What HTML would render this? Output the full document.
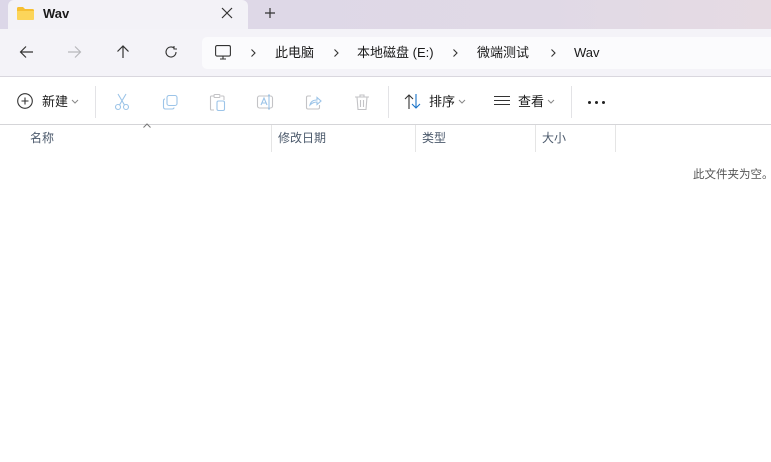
<!DOCTYPE html><html><head><meta charset="utf-8"><style>
*{margin:0;padding:0;box-sizing:border-box}
body{width:771px;height:462px;background:#fff;font-family:"Liberation Sans","Noto Sans CJK SC",sans-serif;position:relative;overflow:hidden;font-size:13px;color:#1a1a1a}
.a{position:absolute;white-space:nowrap;line-height:16px}
svg{position:absolute;overflow:visible}
</style></head><body>
<div class="a" style="left:0;top:0;width:771px;height:29px;background:linear-gradient(90deg,#dcd7e8,#e0d9e6 70%,#e6dbe3)"></div>
<div class="a" style="left:8px;top:0;width:240px;height:29px;background:#f3f2f7;border-radius:6px 6px 0 0"></div>
<svg style="left:17px;top:7px" width="17" height="13"><path d="M0 1.5Q0 0 1.5 0H6L8 2H15.5Q17 2 17 3.5V11.5Q17 13 15.5 13H1.5Q0 13 0 11.5Z" fill="#f6bf32"/><path d="M0 4H17V11.5Q17 13 15.5 13H1.5Q0 13 0 11.5Z" fill="#fcd55a"/></svg>
<div class="a" style="left:43px;top:6px;font-size:13px;font-weight:bold">Wav</div>
<svg style="left:222px;top:8px" width="10" height="10"><path d="M0 0L10 10M10 0L0 10" stroke="#333" stroke-width="1.2"/></svg>
<svg style="left:265px;top:8px" width="10" height="10"><path d="M5 0V10M0 5H10" stroke="#333" stroke-width="1.2"/></svg>
<div class="a" style="left:0;top:29px;width:771px;height:48px;background:#f4f3f8;border-bottom:1px solid #d9d7de"></div>
<svg style="left:20px;top:46px" width="13" height="12"><path d="M13 6H1M6 0.5L0.5 6L6 11.5" stroke="#333" fill="none" stroke-width="1.2"/></svg>
<svg style="left:68px;top:46px" width="13" height="12"><path d="M0 6H12M7 0.5L12.5 6L7 11.5" stroke="#b8b8bc" fill="none" stroke-width="1.2"/></svg>
<svg style="left:117px;top:45px" width="12" height="13"><path d="M6 13V1M0.5 6.5L6 1L11.5 6.5" stroke="#333" fill="none" stroke-width="1.2"/></svg>
<svg style="left:165px;top:46px" width="12" height="12"><path d="M11 6A5 5 0 1 1 9 2M9 0V3H12" stroke="#333" fill="none" stroke-width="1.1"/></svg>
<div class="a" style="left:202px;top:37px;width:569px;height:32px;background:#fbfbfd;border-radius:5px 0 0 5px"></div>
<svg style="left:215px;top:45px" width="16" height="15"><rect x="0.6" y="0.6" width="14.8" height="10.5" rx="1.5" fill="none" stroke="#333" stroke-width="1.1"/><path d="M5 14H11M8 11V14" stroke="#333" stroke-width="1.1"/></svg>
<svg style="left:251px;top:49px" width="5" height="8"><path d="M0.5 0.5L4 4L0.5 7.5" stroke="#333" fill="none" stroke-width="1.1"/></svg>
<svg style="left:334px;top:49px" width="5" height="8"><path d="M0.5 0.5L4 4L0.5 7.5" stroke="#333" fill="none" stroke-width="1.1"/></svg>
<svg style="left:453px;top:49px" width="5" height="8"><path d="M0.5 0.5L4 4L0.5 7.5" stroke="#333" fill="none" stroke-width="1.1"/></svg>
<svg style="left:551px;top:49px" width="5" height="8"><path d="M0.5 0.5L4 4L0.5 7.5" stroke="#333" fill="none" stroke-width="1.1"/></svg>
<div class="a" style="left:275px;top:45px">此电脑</div>
<div class="a" style="left:357px;top:45px">本地磁盘 (E:)</div>
<div class="a" style="left:477px;top:45px">微端测试</div>
<div class="a" style="left:574px;top:45px">Wav</div>
<div class="a" style="left:0;top:124px;width:771px;height:1px;background:#d5d5d8"></div>
<svg style="left:17px;top:93px" width="16" height="16"><circle cx="8" cy="8" r="7.3" fill="none" stroke="#333" stroke-width="1.1"/><path d="M8 4.5V11.5M4.5 8H11.5" stroke="#333" stroke-width="1.1"/></svg>
<div class="a" style="left:42px;top:94px">新建</div>
<svg style="left:72px;top:100px" width="6" height="4"><path d="M0 0L3 3L6 0" stroke="#888" fill="none"/></svg>
<div class="a" style="left:95px;top:86px;width:1px;height:32px;background:#e3e3e6"></div>
<div class="a" style="left:388px;top:86px;width:1px;height:32px;background:#e3e3e6"></div>
<div class="a" style="left:571px;top:86px;width:1px;height:32px;background:#e3e3e6"></div>
<svg style="left:115px;top:94px" width="14" height="16" fill="none" stroke="#9cc4e8" stroke-width="1.1"><circle cx="3" cy="13" r="2.5"/><circle cx="11" cy="13" r="2.5"/><path d="M4.5 11L11 0M9.5 11L3 0"/></svg>
<svg style="left:163px;top:95px" width="15" height="15" fill="none" stroke="#9cc4e8" stroke-width="1.1"><rect x="4" y="0.5" width="10" height="10" rx="2"/><path d="M2 4Q0.5 4 0.5 6V12Q0.5 14 2.5 14H9Q11 14 11 12.5"/></svg>
<svg style="left:210px;top:94px" width="15" height="17" fill="none" stroke="#c3c3c6" stroke-width="1.1"><path d="M4 2H1.5Q0.5 2 0.5 3V15Q0.5 16 1.5 16H4M11 2H13Q14 2 14 3V6"/><rect x="4" y="0.5" width="6" height="3" rx="1"/><rect x="7" y="7" width="7.5" height="9.5" rx="1.5" stroke="#9cc4e8"/></svg>
<svg style="left:257px;top:94px" width="17" height="16" fill="none" stroke="#9cc4e8" stroke-width="1.1"><rect x="0.5" y="2" width="15" height="12" rx="2" stroke="#c3c3c6"/><path d="M4 11L7 4L10 11M5 9H9M11 1H13M12 1V15M11 15H13"/></svg>
<svg style="left:306px;top:95px" width="15" height="15" fill="none" stroke-width="1.1"><path d="M5 1H2Q0.5 1 0.5 2.5V12.5Q0.5 14 2 14H12Q13.5 14 13.5 12.5V10" stroke="#c3c3c6"/><path d="M4 10Q5 5 11 5V2.5L15 6L11 9.5V7Q7 7 4 10Z" stroke="#9cc4e8"/></svg>
<svg style="left:355px;top:94px" width="14" height="16" fill="none" stroke="#c3c3c6" stroke-width="1.1"><path d="M0 3H14M5 3V1H9V3M2 3L3 15.5H11L12 3M5.5 6V13M8.5 6V13"/></svg>
<svg style="left:404px;top:94px" width="18" height="15" fill="none" stroke-width="1.1"><path d="M5 15V1M1 5L5 1L9 5" stroke="#333"/><path d="M12 0V14M8 10L12 14L16 10" stroke="#1a73c8"/></svg>
<div class="a" style="left:429px;top:94px">排序</div>
<svg style="left:459px;top:100px" width="6" height="4"><path d="M0 0L3 3L6 0" stroke="#888" fill="none"/></svg>
<svg style="left:494px;top:96px" width="16" height="10"><path d="M0 .5H16M0 4.5H16M0 8.5H16" stroke="#333" stroke-width="1"/></svg>
<div class="a" style="left:518px;top:94px">查看</div>
<svg style="left:548px;top:100px" width="6" height="4"><path d="M0 0L3 3L6 0" stroke="#888" fill="none"/></svg>
<div class="a" style="left:588px;top:101px;width:3px;height:3px;border-radius:2px;background:#222;box-shadow:7px 0 #222,14px 0 #222"></div>
<svg style="left:143px;top:123px" width="8" height="5"><path d="M0.5 4.5L4 1L7.5 4.5" stroke="#777" fill="none"/></svg>
<div class="a" style="left:30px;top:130px;font-size:12px;color:#4c5a6c">名称</div>
<div class="a" style="left:271px;top:125px;width:1px;height:27px;background:#e5e5e5"></div>
<div class="a" style="left:278px;top:130px;font-size:12px;color:#4c5a6c">修改日期</div>
<div class="a" style="left:415px;top:125px;width:1px;height:27px;background:#e5e5e5"></div>
<div class="a" style="left:422px;top:130px;font-size:12px;color:#4c5a6c">类型</div>
<div class="a" style="left:535px;top:125px;width:1px;height:27px;background:#e5e5e5"></div>
<div class="a" style="left:542px;top:130px;font-size:12px;color:#4c5a6c">大小</div>
<div class="a" style="left:615px;top:125px;width:1px;height:27px;background:#e5e5e5"></div>
<div class="a" style="left:693px;top:167px;font-size:11.5px;color:#555">此文件夹为空。</div>
</body></html>
